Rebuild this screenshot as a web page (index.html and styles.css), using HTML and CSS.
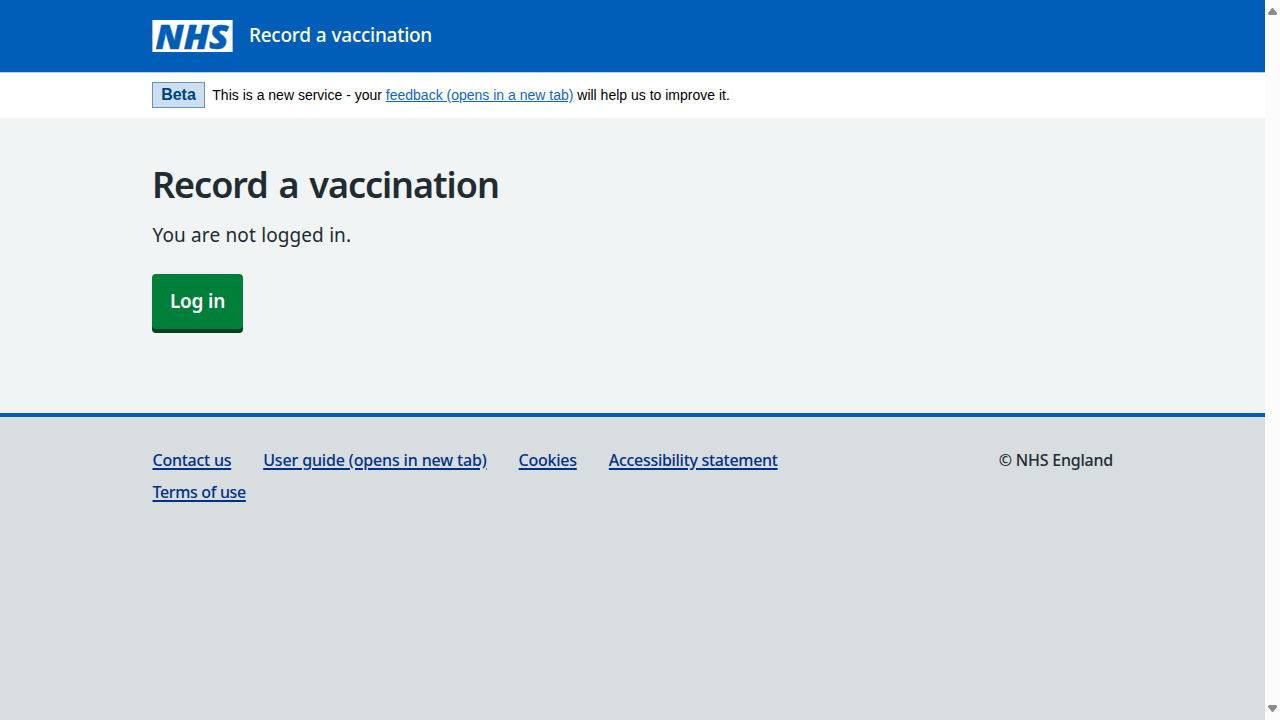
FILE: index.html
```html
<!DOCTYPE html>
<html lang="en">
<head>
<meta charset="utf-8">
<title>Record a vaccination</title>
<link rel="stylesheet" href="styles.css">
</head>
<body>
<div class="page">
  <header class="header">
    <div class="container header-row">
      <svg class="logo" viewBox="0 0 81 32" width="81" height="32" role="img" aria-label="NHS">
        <rect x="0.4" width="80.2" height="32" fill="#fff"/>
        <text class="logo-text" x="3.6" y="28.6" textLength="73" lengthAdjust="spacingAndGlyphs">NHS</text>
      </svg>
      <span class="service">Record a vaccination</span>
    </div>
  </header>
  <div class="banner">
    <div class="container banner-row">
      <strong class="tag">Beta</strong>
      <span>This is a new service - your <a class="feedback" href="#">feedback (opens in a new tab)</a> will help us to improve it.</span>
    </div>
  </div>
  <main class="main">
    <div class="container">
      <h1 class="title">Record a vaccination</h1>
      <p class="lead">You are not logged in.</p>
      <button class="button">Log in</button>
    </div>
  </main>
  <footer class="footer">
    <div class="container footer-row">
      <nav class="links">
        <a class="link contact" href="#">Contact us</a>
        <a class="link guide" href="#">User guide (opens in new tab)</a>
        <a class="link cookies" href="#">Cookies</a>
        <a class="link access" href="#">Accessibility statement</a>
        <a class="link terms" href="#">Terms of use</a>
      </nav>
      <span class="copyright">© NHS England</span>
    </div>
  </footer>
</div>
<div class="scrollbar">
  <svg width="15" height="16" viewBox="0 0 15 16"><path d="M7 8h1l4 5v1l-1 1h-7l-1-1v-1z" fill="#8b8b8b"/></svg>
  <svg width="15" height="16" viewBox="0 0 15 16"><path d="M7 8h1l4 5v1l-1 1h-7l-1-1v-1z" fill="#8b8b8b" transform="rotate(180 7.5 8)"/></svg>
</div>
</body>
</html>
```
FILE: styles.css
```css
* { box-sizing: border-box; }
body {
  margin: 0;
  height: 720px;
  overflow: hidden;
  display: flex;
  font-family: "Noto Sans", "Open Sans", sans-serif;
  color: #212b32;
}
.page { width: 1265px; display: flex; flex-direction: column; }
.container { width: 961px; margin: 0 152px; }
.header { height: 72px; background: #005eb8; }
.header-row { display: flex; align-items: center; height: 72px; gap: 16px; }
.logo { display: block; overflow: visible; }
.logo-text { font: italic 800 34px "Open Sans", sans-serif; fill: #005eb8; stroke: #005eb8; stroke-width: 0.5px; }
.service { color: #fff; font-size: 19px; font-weight: 500; line-height: 28px; letter-spacing: -0.27px; word-spacing: 0.5px; padding: 0 0 2px; }
.banner { height: 46px; background: #fff; border-top: 1px solid #b3cfea; }
.banner-row {
  display: flex; align-items: center; height: 44px; gap: 8px;
  font: 14px/20px "Liberation Sans", Arial, sans-serif; color: #000;
}
.tag {
  width: 53px; height: 26px; border: 1px solid #6b90b9; background: #ccdff1;
  color: #004281; font-size: 16px; line-height: 23px; text-align: center;
}
.banner-row span { margin-left: -0.7px; }
.feedback { color: #0b66d6; }
.main { height: 295px; background: #f0f4f5; padding-top: 40px; }
.title { margin: 0; font-size: 36px; line-height: 54px; font-weight: 600; letter-spacing: -1.05px; word-spacing: 2.5px; }
.lead { margin: 9px 0 0; font-size: 19px; line-height: 28px; font-weight: 450; letter-spacing: 0.08px; word-spacing: 0.3px; padding-left: 0.5px; }
.button {
  display: block; margin: 25px 0 0; width: 91px; height: 55px; padding: 0 0 2px;
  border: 0; border-radius: 4px; background: #007f3b; box-shadow: 0 4px 0 #00401e;
  color: #fff; font: 600 19px/28px "Noto Sans", sans-serif; letter-spacing: -0.2px;
}
.footer { flex: 1; background: #d8dde0; border-top: 4px solid #005eb8; padding-top: 31px; }
.footer-row { display: flex; justify-content: space-between; align-items: flex-start; font-size: 16px; line-height: 24px; font-weight: 500; }
.links { display: flex; flex-wrap: wrap; width: 720px; gap: 8px 32px; padding-left: 0.5px; }
.link { color: #003087; text-decoration-thickness: 1.5px; text-underline-offset: 2px; white-space: nowrap; letter-spacing: -0.25px; }
.guide { letter-spacing: -0.15px; }
.terms { letter-spacing: -0.35px; }
.access { letter-spacing: -0.3px; }
.copyright { letter-spacing: -0.22px; white-space: nowrap; }
.scrollbar { width: 15px; height: 720px; background: #fcfcfc; display: flex; flex-direction: column; justify-content: space-between; }
.scrollbar svg { display: block; }
```
